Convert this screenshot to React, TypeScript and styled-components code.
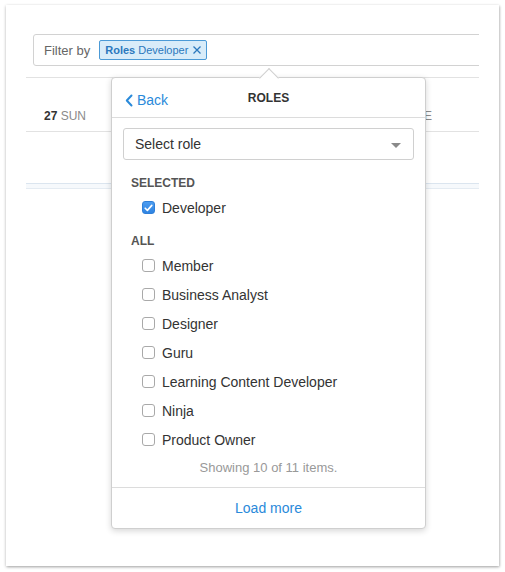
import React, { useState } from "react";
import styled, { createGlobalStyle } from "styled-components";

const GlobalStyle = createGlobalStyle`
  html, body {
    margin: 0;
    padding: 0;
    background: #fff;
    font-family: "Liberation Sans", Arial, Helvetica, sans-serif;
    color: #333;
  }
  * { box-sizing: border-box; }
`;

const ROLES = [
  "Member",
  "Business Analyst",
  "Designer",
  "Guru",
  "Learning Content Developer",
  "Ninja",
  "Product Owner"
];

const App: React.FC = () => {
  const [selected, setSelected] = useState<string[]>(["Developer"]);

  const toggle = (role: string) => {
    setSelected(s => (s.includes(role) ? s.filter(r => r !== role) : [...s, role]));
  };

  return (
    <>
      <GlobalStyle />
      <Page>
        <Card>
          <Content>
            <FilterBar>
              <FilterLabel>Filter by</FilterLabel>
              <Tag>
                <TagKey>Roles</TagKey>
                <span>Developer</span>
                <TagClose viewBox="0 0 10 10">
                  <path d="M1.5 1.5 L8.5 8.5 M8.5 1.5 L1.5 8.5" />
                </TagClose>
              </Tag>
            </FilterBar>
            <DayRow>
              <DayLabel>
                <DayNum>27</DayNum> SUN
              </DayLabel>
              <DayLabel>
                <DayNum>29</DayNum> TUE
              </DayLabel>
            </DayRow>
            <Band />
          </Content>

          <Popover>
            <Arrow />
            <PopHeader>
              <BackLink>
                <svg width="8" height="13" viewBox="0 0 8 13">
                  <path
                    d="M6.5 1.5 L1.8 6.5 L6.5 11.5"
                    fill="none"
                    stroke="currentColor"
                    strokeWidth="2"
                    strokeLinecap="round"
                    strokeLinejoin="round"
                  />
                </svg>
                Back
              </BackLink>
              <PopTitle>ROLES</PopTitle>
            </PopHeader>
            <PopBody>
              <Select>
                Select role
                <Caret />
              </Select>
              <SectionTitle>SELECTED</SectionTitle>
              {selected.map(role => (
                <Row key={role} onClick={() => toggle(role)}>
                  <Box checked>
                    <svg width="9" height="8" viewBox="0 0 9 8">
                      <path
                        d="M1.2 4.2 L3.4 6.4 L7.8 1.4"
                        fill="none"
                        stroke="#fff"
                        strokeWidth="1.6"
                        strokeLinecap="round"
                        strokeLinejoin="round"
                      />
                    </svg>
                  </Box>
                  {role}
                </Row>
              ))}
              <SectionTitle spaced>ALL</SectionTitle>
              {ROLES.map(role => (
                <Row key={role} onClick={() => toggle(role)}>
                  <Box />
                  {role}
                </Row>
              ))}
              <Showing>Showing 10 of 11 items.</Showing>
            </PopBody>
            <PopFooter>
              <LoadMore>Load more</LoadMore>
            </PopFooter>
          </Popover>
        </Card>
      </Page>
    </>
  );
};

const Page = styled.div`
  padding: 5px 6px;
  width: 505px;
  height: 572px;
`;

const Card = styled.div`
  position: relative;
  width: 493px;
  height: 561px;
  background: #fff;
  box-shadow: 0 1px 3px rgba(0, 0, 0, 0.28), 1px 1px 2px rgba(0, 0, 0, 0.12);
  padding: 29px 20px 0;
`;

const Content = styled.div`
  width: 453px;
  overflow: hidden;
`;

const FilterBar = styled.div`
  display: flex;
  align-items: center;
  margin-left: 7px;
  width: 470px;
  height: 32px;
  border: 1px solid #d2d2d2;
  border-radius: 3px;
  padding-left: 10px;
`;

const FilterLabel = styled.span`
  font-size: 13px;
  color: #666;
  margin-right: 9px;
`;

const Tag = styled.span`
  display: inline-flex;
  align-items: center;
  height: 20px;
  padding: 0 4px 0 5px;
  background: #d8ecf9;
  border: 1px solid #4b9ad6;
  border-radius: 2px;
  font-size: 11px;
  color: #2b78bd;
`;

const TagKey = styled.b`
  font-weight: bold;
  margin-right: 3px;
`;

const TagClose = styled.svg`
  width: 10px;
  height: 10px;
  margin-left: 4px;
  stroke: #2b78bd;
  stroke-width: 1.3;
`;

const DayRow = styled.div`
  display: flex;
  justify-content: space-between;
  align-items: flex-end;
  margin-top: 11px;
  height: 55px;
  padding: 0 47px 8px 18px;
  border-top: 1px solid #e2e2e2;
  border-bottom: 1px solid #e2e2e2;
`;

const DayLabel = styled.span`
  font-size: 12px;
  line-height: 14px;
  color: #8a8a8a;
`;

const DayNum = styled.b`
  color: #333;
  font-weight: bold;
`;

const Band = styled.div`
  margin-top: 51px;
  height: 6px;
  border-top: 1px solid #dbe5ef;
  border-bottom: 1px solid #e4ebf2;
  background: #f6f9fc;
`;

const Popover = styled.div`
  position: absolute;
  left: 105px;
  top: 72px;
  width: 315px;
  height: 452px;
  background: #fff;
  border: 1px solid #cfcfcf;
  border-radius: 4px;
  box-shadow: 0 2px 6px rgba(0, 0, 0, 0.16);
  display: flex;
  flex-direction: column;
`;

const Arrow = styled.div`
  position: absolute;
  top: -7px;
  left: 150px;
  width: 14px;
  height: 14px;
  background: #fff;
  border-top: 1px solid #cfcfcf;
  border-left: 1px solid #cfcfcf;
  transform: rotate(45deg);
`;

const PopHeader = styled.div`
  position: relative;
  display: flex;
  align-items: center;
  justify-content: center;
  height: 40px;
  border-bottom: 1px solid #dcdcdc;
`;

const BackLink = styled.a`
  position: absolute;
  left: 13px;
  top: 14px;
  display: flex;
  align-items: center;
  gap: 4px;
  font-size: 14px;
  color: #2a8ada;
  cursor: pointer;
`;

const PopTitle = styled.span`
  font-size: 12px;
  font-weight: bold;
  color: #333;
  margin-top: 1px;
`;

const PopBody = styled.div`
  flex: 1;
  padding: 10px 11px 0;
`;

const Select = styled.div`
  position: relative;
  display: flex;
  align-items: center;
  height: 32px;
  padding-left: 11px;
  border: 1px solid #d0d0d0;
  border-radius: 3px;
  font-size: 14px;
  color: #333;
  margin-bottom: 13px;
`;

const Caret = styled.span`
  position: absolute;
  right: 12px;
  top: 14px;
  width: 0;
  height: 0;
  border-left: 5px solid transparent;
  border-right: 5px solid transparent;
  border-top: 5px solid #8a8a8a;
`;

const SectionTitle = styled.div<{ spaced?: boolean }>`
  height: 20px;
  line-height: 20px;
  margin-top: ${p => (p.spaced ? "9px" : "0")};
  padding-left: 8px;
  font-size: 12px;
  font-weight: bold;
  color: #555;
`;

const Row = styled.div`
  display: flex;
  align-items: center;
  height: 29px;
  padding-left: 19px;
  font-size: 14px;
  color: #333;
  cursor: pointer;
`;

const Box = styled.span<{ checked?: boolean }>`
  display: inline-flex;
  align-items: center;
  justify-content: center;
  width: 13px;
  height: 13px;
  margin-right: 7px;
  border-radius: 3px;
  background: ${p => (p.checked ? "linear-gradient(#4c9cf0, #2f84e2)" : "#fff")};
  border: 1px solid ${p => (p.checked ? "#2f7fd8" : "#a9a9a9")};
`;

const Showing = styled.div`
  text-align: center;
  padding: 4px 0 8px;
  line-height: 20px;
  font-size: 13px;
  color: #999;
`;

const PopFooter = styled.div`
  display: flex;
  align-items: center;
  justify-content: center;
  height: 41px;
  border-top: 1px solid #dcdcdc;
`;

const LoadMore = styled.a`
  font-size: 14px;
  color: #2a8ada;
  cursor: pointer;
`;

export default App;
